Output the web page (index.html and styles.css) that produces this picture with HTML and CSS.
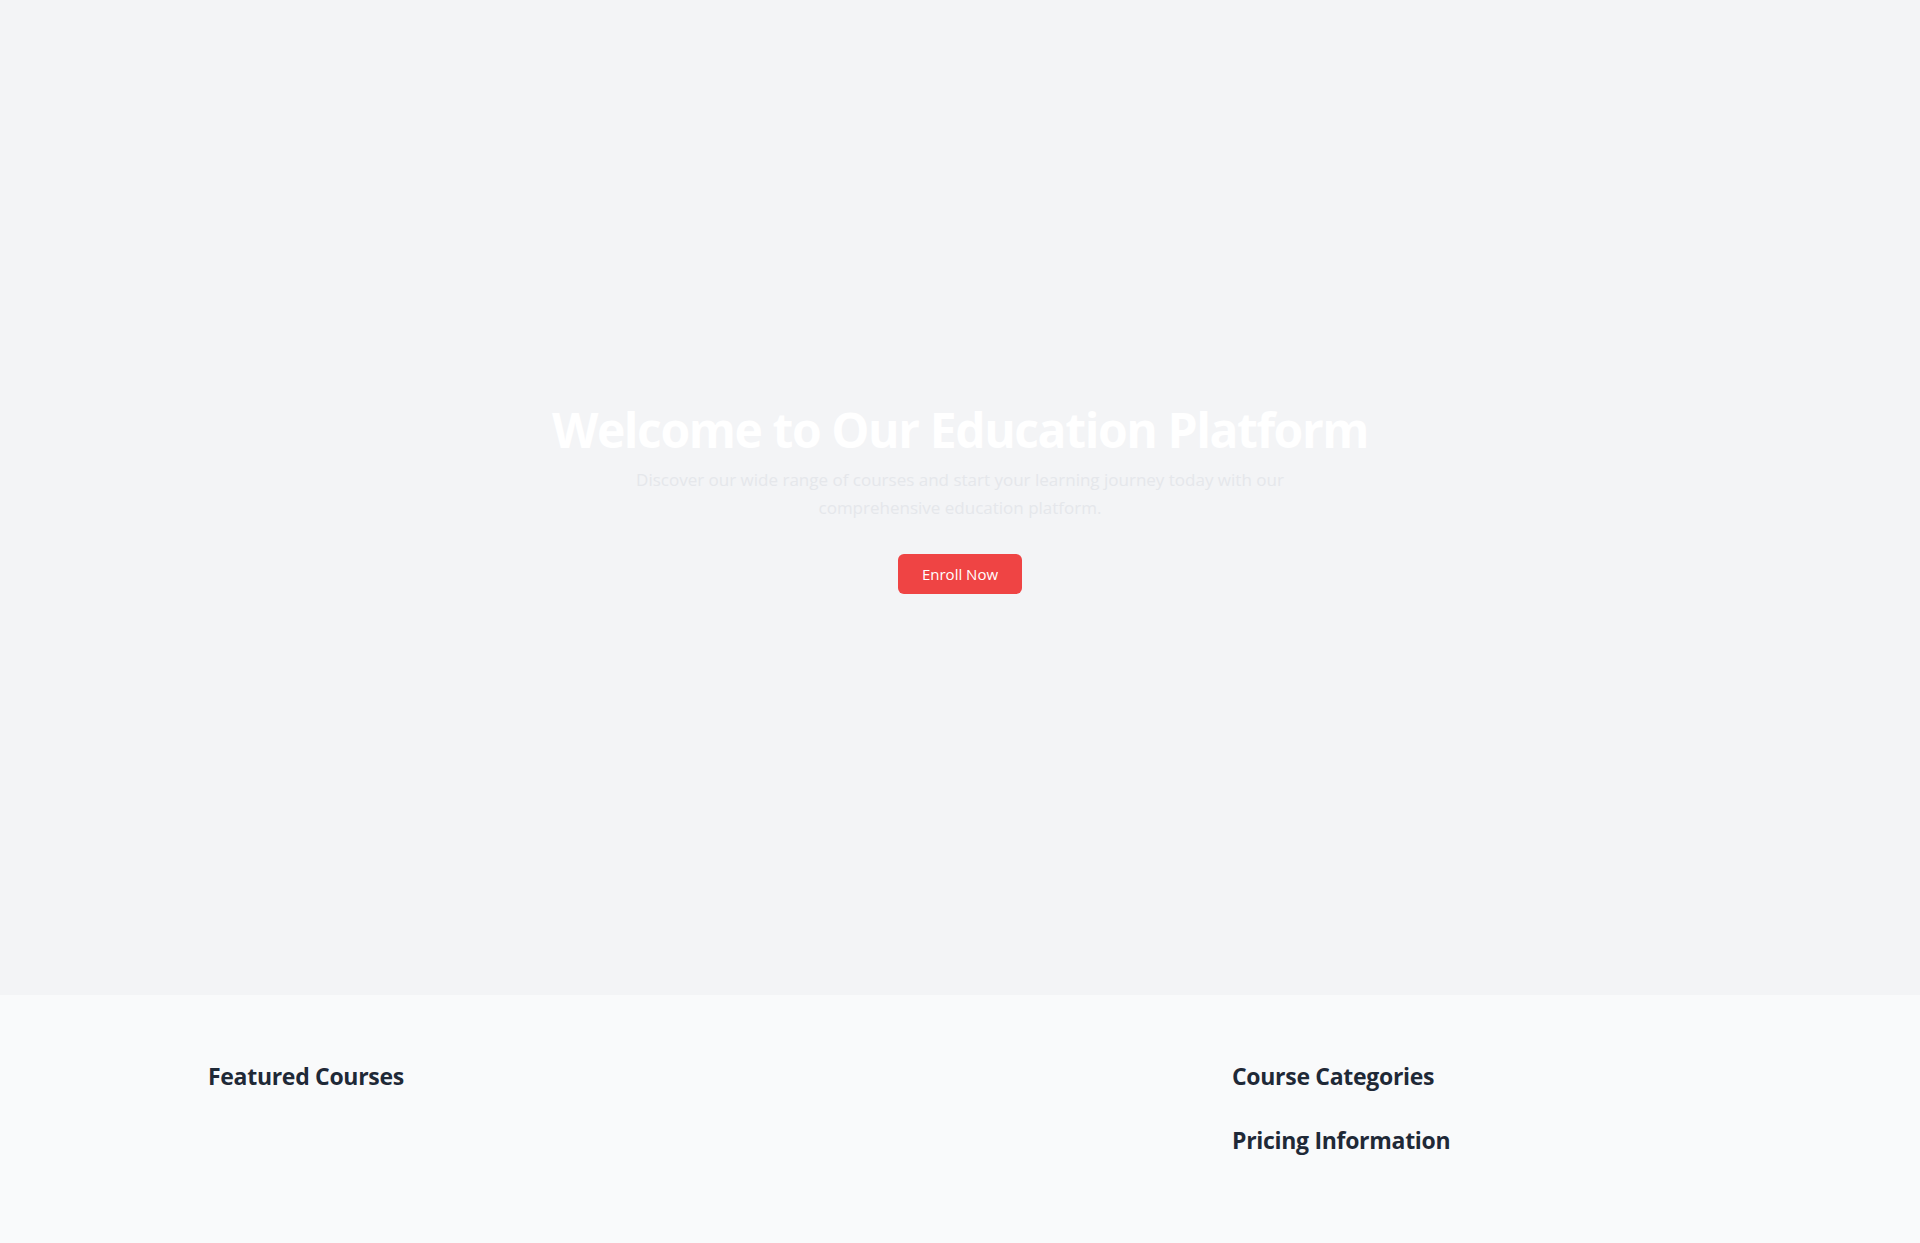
FILE: index.html
```html
<!DOCTYPE html>
<html lang="en">
<head>
<meta charset="utf-8">
<title>Education Platform</title>
<link rel="stylesheet" href="styles.css">
</head>
<body>
<section class="hero">
  <div class="hero-inner">
    <h1 class="hero-title">Welcome to Our Education Platform</h1>
    <p class="hero-text">Discover our wide range of courses and start your learning journey today with our comprehensive education platform.</p>
    <a class="btn" href="#">Enroll Now</a>
  </div>
</section>
<section class="content">
  <div class="container grid">
    <div class="main-col">
      <h2 class="section-title">Featured Courses</h2>
    </div>
    <div class="side-col">
      <h2 class="section-title">Course Categories</h2>
      <h2 class="section-title">Pricing Information</h2>
    </div>
  </div>
</section>
</body>
</html>
```
FILE: styles.css
```css
* { box-sizing: border-box; }
html, body { margin: 0; padding: 0; }
body {
  font-family: "Open Sans", "Noto Sans", sans-serif;
  background: #f9fafb;
  color: #1f2937;
}
.hero {
  background: #f3f4f6;
  height: 995px;
  display: flex;
  align-items: center;
  justify-content: center;
  text-align: center;
}
.hero-inner {
  display: flex;
  flex-direction: column;
  align-items: center;
}
.hero-title {
  margin: 0 0 8px;
  font-size: 48px;
  line-height: 56px;
  font-weight: 700;
  color: #ffffff;
  letter-spacing: -1.4px;
}
.hero-text {
  margin: 0 0 32px;
  max-width: 672px;
  font-size: 17px;
  line-height: 28px;
  color: #e5e7eb;
}
.btn {
  display: inline-block;
  background: #ef4444;
  color: #ffffff;
  text-decoration: none;
  font-size: 15px;
  line-height: 24px;
  padding: 8px 24px;
  border-radius: 6px;
}
.content {
  padding: 65px 0 64px;
}
.container {
  width: 1504px;
  margin: 0 auto;
}
.grid {
  display: grid;
  grid-template-columns: repeat(3, 1fr);
  gap: 32px;
}
.main-col { grid-column: span 2; }
.section-title {
  margin: 0 0 32px;
  font-size: 23px;
  line-height: 32px;
  font-weight: 700;
  color: #1f2937;
  letter-spacing: -0.3px;
}
```
